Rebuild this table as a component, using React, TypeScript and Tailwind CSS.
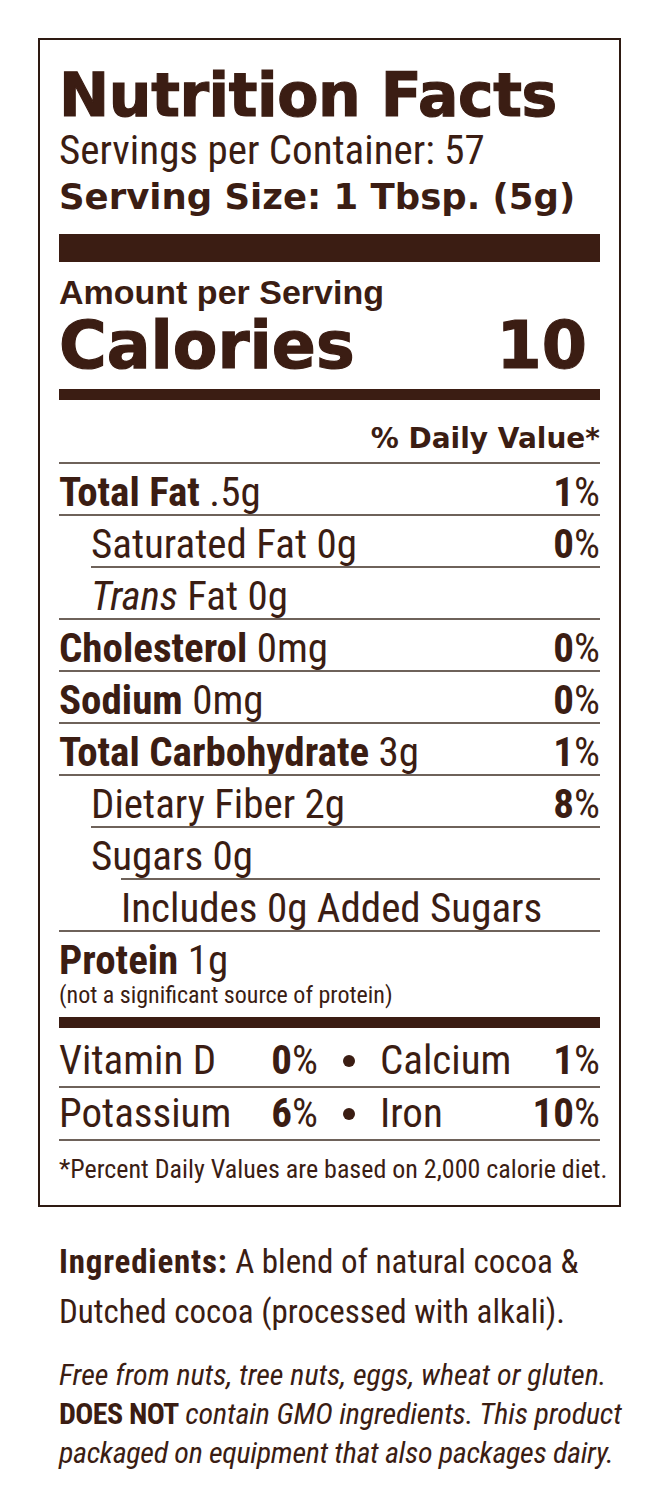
const cond = "font-['Roboto_Condensed',sans-serif]";
const wide = "font-['DejaVu_Sans',sans-serif] font-bold";

type Row = {
  label: string;
  bold?: boolean;
  italicPrefix?: string;
  amount: string;
  pct?: string;
  indent: string;
  line: string;
};

const rows: Row[] = [
  { label: "Total Fat", bold: true, amount: " .5g", pct: "1", indent: "pl-0", line: "ml-0" },
  { label: "Saturated Fat", amount: " 0g", pct: "0", indent: "pl-[32px]", line: "ml-0" },
  { label: "Fat", italicPrefix: "Trans ", amount: " 0g", indent: "pl-[32px]", line: "ml-[32px]" },
  { label: "Cholesterol", bold: true, amount: " 0mg", pct: "0", indent: "pl-0", line: "ml-0" },
  { label: "Sodium", bold: true, amount: " 0mg", pct: "0", indent: "pl-0", line: "ml-0" },
  { label: "Total Carbohydrate", bold: true, amount: " 3g", pct: "1", indent: "pl-0", line: "ml-0" },
  { label: "Dietary Fiber", amount: " 2g", pct: "8", indent: "pl-[32px]", line: "ml-0" },
  { label: "Sugars", amount: " 0g", indent: "pl-[32px]", line: "ml-[32px]" },
  { label: "Includes 0g Added Sugars", amount: "", indent: "pl-[62px]", line: "ml-[62px]" },
];

function Pct({ value }: { value: string }) {
  return (
    <span className="text-right">
      <span className="font-bold">{value}</span>%
    </span>
  );
}

function NutrientRow({ row }: { row: Row }) {
  return (
    <div>
      <div className={`h-[2px] bg-[#6e625a] ${row.line}`} />
      <div className={`flex justify-between pt-[6px] h-[50px] leading-[44px] text-[41px] ${row.indent}`}>
        <span className="whitespace-nowrap">
          {row.italicPrefix && <i>{row.italicPrefix}</i>}
          <span className={row.bold ? "font-bold" : ""}>{row.label}</span>
          {row.amount}
        </span>
        {row.pct && <Pct value={row.pct} />}
      </div>
    </div>
  );
}

function Dot() {
  return <span className="w-[12px] h-[12px] rounded-full bg-[#3b1d13]" />;
}

export default function App() {
  return (
    <div className={`min-h-[1500px] bg-white text-[#3b1d13] pt-[38px] pl-[38px] ${cond}`}>
      <div className="w-[583px] border-2 border-[#2e1a12] px-[19px] pt-[26px] pb-[21px]">
        <h1
          className={`${wide} text-[60px] leading-[58px] tracking-[-0.4px] whitespace-nowrap [-webkit-text-stroke:1.2px_#3b1d13]`}
        >
          Nutrition Facts
        </h1>
        <p className="mt-[6px] text-[41px] leading-[41px] whitespace-nowrap">Servings per Container: 57</p>
        <p className={`${wide} mt-[8px] text-[35.5px] leading-[35px] whitespace-nowrap`}>
          Serving Size: 1 Tbsp. (5g)
        </p>

        <div className="mt-[20px] h-[28px] bg-[#3b1d13]" />

        <p className="mt-[14px] font-['Liberation_Sans',sans-serif] font-bold text-[34px] leading-[33px]">
          Amount per Serving
        </p>
        <div
          className={`${wide} mt-[5px] flex justify-between items-baseline text-[65px] leading-[64px] [-webkit-text-stroke:1.2px_#3b1d13]`}
        >
          <span>Calories</span>
          <span className="pr-[13px]">10</span>
        </div>

        <div className="mt-[11px] h-[11px] bg-[#3b1d13]" />

        <p className={`${wide} mt-[25px] mb-[9px] text-right text-[28px] leading-[28px]`}>% Daily Value*</p>

        {rows.map((r) => (
          <NutrientRow key={r.label} row={r} />
        ))}

        <div className="h-[2px] bg-[#6e625a]" />
        <div className="pt-[6px] text-[41px] leading-[44px] whitespace-nowrap">
          <span className="font-bold">Protein</span> 1g
        </div>
        <p className="text-[24px] leading-[26px] whitespace-nowrap">(not a significant source of protein)</p>

        <div className="mt-[9px] h-[11px] bg-[#3b1d13]" />

        <div className="grid grid-cols-[200px_59px_62px_1fr_auto] items-center text-[41px] leading-[51px] pt-[7px]">
          <span>Vitamin D</span>
          <Pct value="0" />
          <span className="flex justify-center">
            <Dot />
          </span>
          <span>Calcium</span>
          <Pct value="1" />
        </div>
        <div className="h-[2px] bg-[#6e625a]" />
        <div className="grid grid-cols-[200px_59px_62px_1fr_auto] items-center text-[41px] leading-[51px]">
          <span>Potassium</span>
          <Pct value="6" />
          <span className="flex justify-center">
            <Dot />
          </span>
          <span>Iron</span>
          <Pct value="10" />
        </div>
        <div className="h-[2px] bg-[#6e625a]" />
        <p className="pt-[13px] text-[26px] leading-[30px] whitespace-nowrap">
          *Percent Daily Values are based on 2,000 calorie diet.
        </p>
      </div>

      <div className="pl-[21px] pt-[30px]">
        <p className="text-[33px] leading-[50px]">
          <span className="block whitespace-nowrap">
            <span className="font-bold tracking-[0.8px]">Ingredients:</span> A blend of natural cocoa &amp;
          </span>
          <span className="block whitespace-nowrap">Dutched cocoa (processed with alkali).</span>
        </p>
        <p className="mt-[18px] text-[30px] leading-[39px] italic">
          <span className="block whitespace-nowrap">Free from nuts, tree nuts, eggs, wheat or gluten.</span>
          <span className="block whitespace-nowrap tracking-[-0.15px]">
            <span className="font-bold not-italic tracking-[-0.6px]">DOES NOT</span> contain GMO ingredients. This
            product
          </span>
          <span className="block whitespace-nowrap tracking-[-0.3px]">
            packaged on equipment that also packages dairy.
          </span>
        </p>
      </div>
    </div>
  );
}
